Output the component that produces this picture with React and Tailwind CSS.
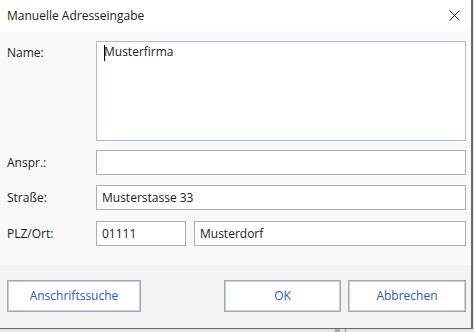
const font = { fontFamily: '"Open Sans", "Noto Sans", sans-serif' };

function Label({ children, className = "" }) {
  return (
    <div className={"w-[89px] shrink-0 text-[12px] text-[#1b1b1b] " + className}>
      {children}
    </div>
  );
}

function Field({ value, className = "" }) {
  return (
    <div
      className={
        "h-[25px] border border-[#adadad] bg-white flex items-center pl-[5px] text-[12px] text-[#1b1b1b] " +
        className
      }
    >
      {value}
    </div>
  );
}

function Btn({ children, className = "" }) {
  return (
    <div
      className={
        "h-[32px] border border-[#9ea8b9] shadow-[inset_0_0_0_1px_#c8cfda] bg-white flex items-center justify-center text-[12px] text-[#2c5cae] " +
        className
      }
    >
      {children}
    </div>
  );
}

export default function App() {
  return (
    <div className="w-[474px] h-[332px] bg-[#e4e4e4] overflow-hidden relative" style={font}>
      <div className="w-[473px] border-r-2 border-b border-[#6a6a6a] bg-[#f9f9f9]">
        <div className="h-[31px] bg-white flex items-center justify-between pl-[7px] pr-[11px]">
          <span className="text-[12px] text-[#1b1b1b]">Manuelle Adresseingabe</span>
          <svg width="11" height="11" viewBox="0 0 11 11">
            <path d="M0.5 0.5 L10.5 10.5 M10.5 0.5 L0.5 10.5" stroke="#222" strokeWidth="1" />
          </svg>
        </div>

        <div className="pl-[7px] pr-[5px] pt-[10px] pb-[19px]">
          <div className="flex">
            <Label className="pt-[3px]">Name:</Label>
            <div className="relative w-[370px] h-[100px] border border-[#a6bce0] bg-white pl-[7px] pt-[1px] text-[12px] text-[#1b1b1b]">
              <span className="absolute left-[7px] top-[3px] w-px h-[16px] bg-black" />
              Musterfirma
            </div>
          </div>

          <div className="flex items-center mt-[9px]">
            <Label>Anspr.:</Label>
            <Field value="" className="w-[370px]" />
          </div>

          <div className="flex items-center mt-[10px]">
            <Label>Straße:</Label>
            <Field value="Musterstasse 33" className="w-[370px]" />
          </div>

          <div className="flex items-center mt-[11px]">
            <Label>PLZ/Ort:</Label>
            <Field value="01111" className="w-[90px]" />
            <Field value="Musterdorf" className="w-[272px] ml-[8px]" />
          </div>
        </div>

        <div className="h-[63px] bg-[#f3f3f3] flex items-start pt-[15px] pl-[7px]">
          <Btn className="w-[134px]">Anschriftssuche</Btn>
          <Btn className="w-[117px] ml-[83px]">OK</Btn>
          <Btn className="w-[118px] ml-[7px]">Abbrechen</Btn>
        </div>
      </div>
      <div className="absolute left-[335px] top-[329px] w-[5px] h-[3px] bg-[#9aa7bc]" />
      <div className="absolute left-[345px] top-[329px] w-px h-[3px] bg-[#8a8a8a]" />
    </div>
  );
}
